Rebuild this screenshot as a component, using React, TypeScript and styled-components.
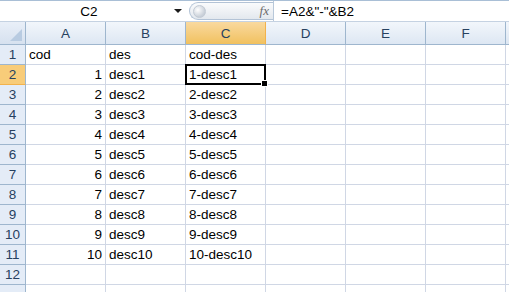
import styled, { createGlobalStyle, css } from "styled-components";

const GlobalStyle = createGlobalStyle`
  html, body {
    margin: 0;
    padding: 0;
    background: #ffffff;
    overflow: hidden;
  }
  body {
    font-family: "Liberation Sans", Arial, sans-serif;
  }
`;

const Window = styled.div`
  width: 509px;
  height: 292px;
  display: flex;
  flex-direction: column;
  background: #ffffff;
  overflow: hidden;
`;

const FormulaBar = styled.div`
  height: 22px;
  display: flex;
  align-items: stretch;
  border-top: 1px solid #a9bfd6;
  border-bottom: 1px solid #c5d2e2;
  background: #ffffff;
`;

const NameBox = styled.div`
  width: 186px;
  display: flex;
  align-items: center;
  font-size: 13.5px;
  color: #000;
`;

const NameText = styled.span`
  flex: 1;
  text-align: center;
  padding-left: 4px;
`;

const DropArrow = styled.span`
  width: 0;
  height: 0;
  margin-right: 4px;
  border-left: 4px solid transparent;
  border-right: 4px solid transparent;
  border-top: 4px solid #1b1b1b;
`;

const Pill = styled.div`
  width: 84px;
  margin: 1px 0 1px 3px;
  border: 1px solid #b3c3d6;
  border-radius: 10px 0 0 10px;
  border-right: none;
  background: linear-gradient(#fafbfc, #e3e8ee);
  display: flex;
  align-items: center;
  justify-content: space-between;
  padding: 0 4px 0 3px;
  box-sizing: border-box;
`;

const Knob = styled.span`
  width: 13px;
  height: 13px;
  border-radius: 50%;
  background: radial-gradient(circle at 35% 35%, #ffffff, #c8cfd8 70%);
  border: 1px solid #c2cad4;
  box-sizing: border-box;
`;

const Fx = styled.span`
  font-family: "Liberation Serif", "Times New Roman", serif;
  font-style: italic;
  font-size: 13px;
  color: #6b6b6b;
`;

const FormulaInput = styled.div`
  flex: 1;
  display: flex;
  align-items: center;
  padding-left: 7px;
  border-left: 1px solid #b8c8da;
  font-size: 13.5px;
  color: #000;
`;

const Sheet = styled.div`
  display: grid;
  grid-template-columns: 26px repeat(6, 80px) 1fr;
  grid-template-rows: 23px;
  grid-auto-rows: 20px;
`;

const headerBase = css`
  display: flex;
  align-items: center;
  justify-content: center;
  font-size: 13.5px;
  color: #27415f;
  box-sizing: border-box;
  border-right: 1px solid #9eb6ce;
  border-bottom: 1px solid #9eb6ce;
`;

const ColHeader = styled.div<{ $active?: boolean }>`
  ${headerBase}
  background: ${(p) =>
    p.$active
      ? "linear-gradient(#f9d99f, #f1c15f)"
      : "linear-gradient(#f2f6fb, #dde7f3)"};
  border-right-color: ${(p) => (p.$active ? "#f2b24c" : "#9eb6ce")};
`;

const RowHeader = styled.div<{ $active?: boolean }>`
  ${headerBase}
  background: ${(p) => (p.$active ? "#f8cc79" : "#e4ecf7")};
  border-bottom-color: ${(p) => (p.$active ? "#f2b24c" : "#9eb6ce")};
  overflow: hidden;
`;

const Corner = styled.div`
  box-sizing: border-box;
  background: linear-gradient(#e9eff8, #d6e1ef);
  border-right: 1px solid #9eb6ce;
  border-bottom: 1px solid #9eb6ce;
  position: relative;
  &::after {
    content: "";
    position: absolute;
    right: 3px;
    bottom: 3px;
    width: 0;
    height: 0;
    border-left: 12px solid transparent;
    border-bottom: 12px solid #b8cbe1;
  }
`;

const Cell = styled.div<{ $num?: boolean; $selected?: boolean }>`
  box-sizing: border-box;
  border-right: 1px solid #d0d7e5;
  border-bottom: 1px solid #d0d7e5;
  font-size: 13.5px;
  color: #000;
  display: flex;
  align-items: center;
  justify-content: ${(p) => (p.$num ? "flex-end" : "flex-start")};
  padding: 0 3px;
  white-space: nowrap;
  position: relative;
  ${(p) =>
    p.$selected &&
    css`
      &::before {
        content: "";
        position: absolute;
        left: -1px;
        top: -1px;
        right: -1px;
        bottom: -1px;
        border: 2px solid #000;
        box-sizing: border-box;
      }
      &::after {
        content: "";
        position: absolute;
        right: -3px;
        bottom: -3px;
        width: 5px;
        height: 5px;
        background: #000;
        border: 1px solid #fff;
        z-index: 1;
      }
    `}
`;

const columns = ["A", "B", "C", "D", "E", "F"];

type RowData = (string | number | null)[];

const rows: RowData[] = [
  ["cod", "des", "cod-des"],
  ...Array.from({ length: 10 }, (_, i): RowData => [
    i + 1,
    `desc${i + 1}`,
    `${i + 1}-desc${i + 1}`,
  ]),
  [],
];

function RowFragment({ index, row }: { index: number; row: RowData }) {
  return (
    <>
      <RowHeader $active={index === 1}>{index + 1}</RowHeader>
      {columns.map((c, ci) => {
        const v = row[ci];
        return (
          <Cell
            key={c}
            $num={typeof v === "number"}
            $selected={index === 1 && c === "C"}
          >
            {v ?? ""}
          </Cell>
        );
      })}
      <Cell />
    </>
  );
}

function App() {
  return (
    <Window>
      <GlobalStyle />
      <FormulaBar>
        <NameBox>
          <NameText>C2</NameText>
          <DropArrow />
        </NameBox>
        <Pill>
          <Knob />
          <Fx>fx</Fx>
        </Pill>
        <FormulaInput>=A2&amp;"-"&amp;B2</FormulaInput>
      </FormulaBar>
      <Sheet>
        <Corner />
        {columns.map((c) => (
          <ColHeader key={c} $active={c === "C"}>
            {c}
          </ColHeader>
        ))}
        <ColHeader />
        {rows.map((row, r) => (
          <RowFragment key={r} index={r} row={row} />
        ))}
        <RowHeader />
        {columns.map((c) => (
          <Cell key={c} />
        ))}
        <Cell />
      </Sheet>
    </Window>
  );
}

export default App;
